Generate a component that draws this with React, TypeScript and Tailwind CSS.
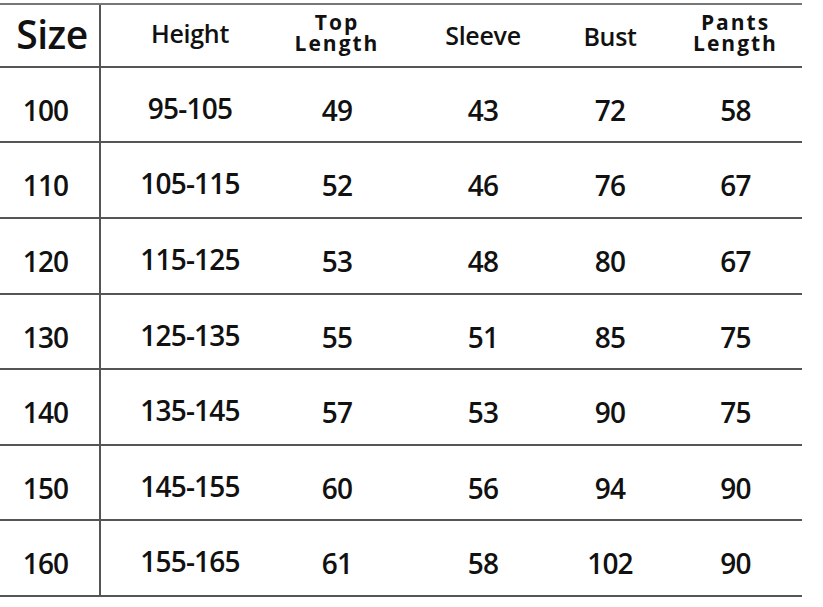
import React from 'react';

const rows = [
  { size: '100', height: '95-105', top: '49', sleeve: '43', bust: '72', pants: '58', h: 'h-[75px]' },
  { size: '110', height: '105-115', top: '52', sleeve: '46', bust: '76', pants: '67', h: 'h-[76px]' },
  { size: '120', height: '115-125', top: '53', sleeve: '48', bust: '80', pants: '67', h: 'h-[76px]' },
  { size: '130', height: '125-135', top: '55', sleeve: '51', bust: '85', pants: '75', h: 'h-[75px]' },
  { size: '140', height: '135-145', top: '57', sleeve: '53', bust: '90', pants: '75', h: 'h-[76px]' },
  { size: '150', height: '145-155', top: '60', sleeve: '56', bust: '94', pants: '90', h: 'h-[75px]' },
  { size: '160', height: '155-165', top: '61', sleeve: '58', bust: '102', pants: '90', h: 'h-[76px]' },
];

const grid = 'grid grid-cols-[101px_178px_116px_176px_78px_153px] border-b-2 border-[#555]';

const App = () => {
  return (
    <div className="w-[823px] h-[607px] bg-white text-[#111] overflow-hidden" style={{ fontFamily: '"Open Sans", "Noto Sans", sans-serif' }}>
      <div className="w-[802px] mt-[3px] border-t-2 border-[#777]">
        <div className={`${grid} h-[63px] font-semibold`}>
          <div className="flex items-center justify-center border-r-2 border-[#555] text-[39px] tracking-[-0.5px] pb-[2px] pl-[5px]">Size</div>
          <div className="flex items-center justify-center text-[25px] tracking-[-0.3px] pb-[4px]">Height</div>
          <div className="flex flex-col items-center justify-center text-[21px] font-bold leading-[21px] tracking-[2px] pb-[6px]">
            <span>Top</span>
            <span>Length</span>
          </div>
          <div className="flex items-center justify-center text-[25px] tracking-[-0.3px]">Sleeve</div>
          <div className="flex items-center justify-center text-[25px] tracking-[-0.3px] pt-[3px]">Bust</div>
          <div className="flex flex-col items-center justify-center text-[21px] font-bold leading-[21px] tracking-[2px] pl-[20px] pb-[6px]">
            <span>Pants</span>
            <span>Length</span>
          </div>
        </div>
        {rows.map((r) => (
          <div key={r.size} className={`${grid} ${r.h} text-[28px] font-semibold tracking-[-0.8px]`}>
            <div className="flex items-center justify-center border-r-2 border-[#555] pt-[10px] pr-[8px]">{r.size}</div>
            <div className="flex items-center justify-center pt-[6px]">{r.height}</div>
            <div className="flex items-center justify-center pt-[10px]">{r.top}</div>
            <div className="flex items-center justify-center pt-[10px]">{r.sleeve}</div>
            <div className="flex items-center justify-center pt-[10px]">{r.bust}</div>
            <div className="flex items-center justify-center pt-[10px] pl-[20px]">{r.pants}</div>
          </div>
        ))}
      </div>
    </div>
  );
};

export default App;
